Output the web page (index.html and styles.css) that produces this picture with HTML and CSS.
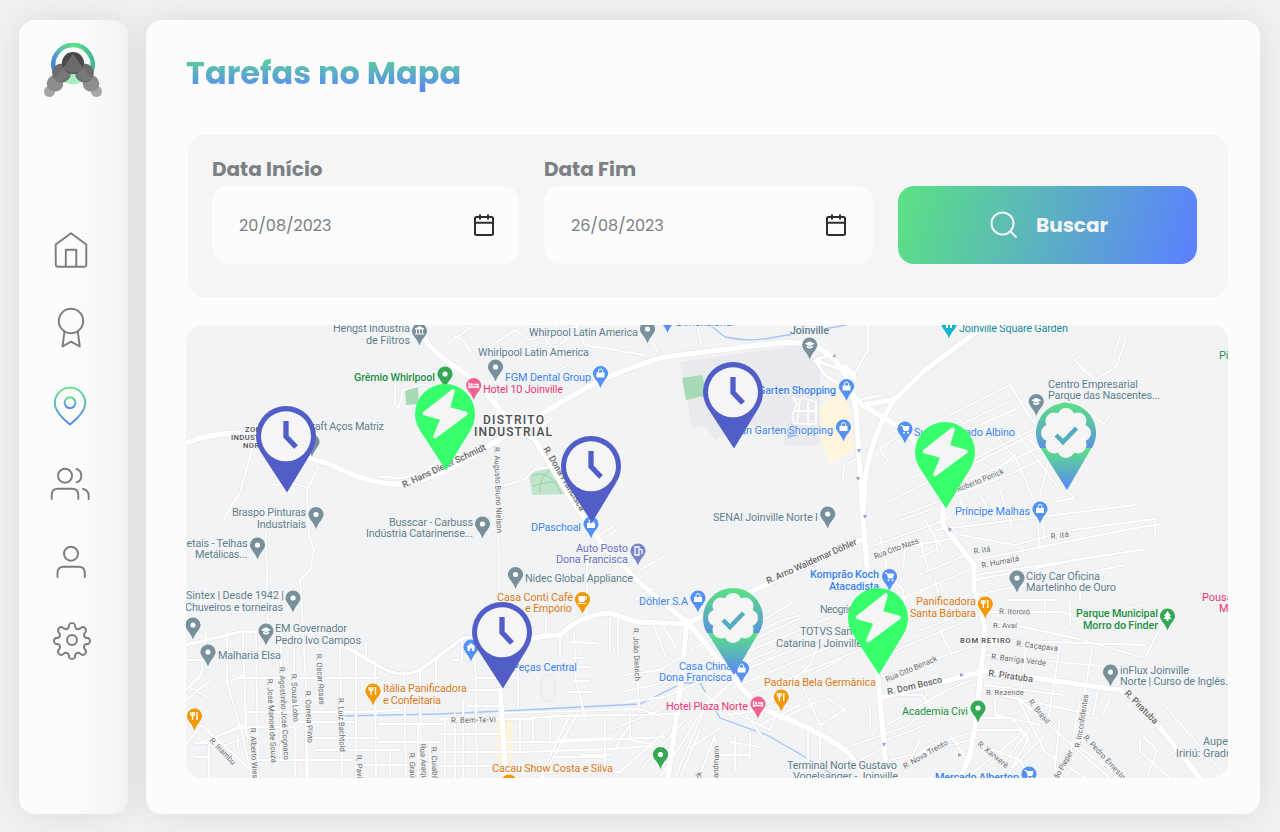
FILE: index.html
```html
<!DOCTYPE html>
<html lang="pt-BR">
<head>
<meta charset="utf-8">
<title>Tarefas no Mapa</title>
<link rel="stylesheet" href="styles.css">
</head>
<body>
<div class="app">
  <aside class="sidebar">
    <svg class="logo" width="60" height="56" viewBox="43 42 60 56">
      <defs>
        <linearGradient id="ring" x1="0" y1=".5" x2="1" y2=".4"><stop offset="0" stop-color="#4588dc"/><stop offset=".2" stop-color="#5bc0ad"/><stop offset=".6" stop-color="#5be283"/><stop offset="1" stop-color="#3fb795"/></linearGradient>
      </defs>
      <path d="M59 77q14 15 28 0l-14-18z" fill="#a9efbd"/>
      <path d="M54.500 71.500a19.700 19.700 0 1 1 37 0" fill="none" stroke="url(#ring)" stroke-width="4.500"/>
      <g>
        <g fill="#a6a6a6"><circle cx="49.500" cy="91.500" r="5.500"/><circle cx="96.500" cy="91.500" r="5.500"/></g>
        <g fill="#8d8d8d"><circle cx="55" cy="83.500" r="8.300"/><circle cx="91" cy="83.500" r="8.300"/></g>
        <g fill="#6c6c6c"><circle cx="61.500" cy="73" r="9.400"/><circle cx="84.500" cy="73" r="9.400"/></g>
        <circle cx="73" cy="63" r="11" fill="#484848"/>
        <path d="M73 54l10 14q-10 10-20 0z" fill="#6b6b6b"/>
        <path d="M63 68L54 79q9 6 16-5zM83 68l9 11q-9 6-16-5z" fill="#808080" opacity=".6"/>
      </g>
    </svg>
    <nav class="nav">
      <a class="nav-item"><svg viewBox="51 230 40 40"><path d="M55.700 244.500L71 233.300l15.300 11.200v20q0 2.200-2.200 2.200H58q-2.200 0-2.200-2.200zM65.800 266.500v-16.700h10.500v16.700"/></svg></a>
      <a class="nav-item"><svg viewBox="51 308 40 40"><circle cx="71" cy="321" r="12.200"/><path d="M64.500 331.500l-2 15 8.500-4.800 8.800 4.800-2-15"/></svg></a>
      <a class="nav-item nav-item-active"><svg viewBox="51 386 40 40"><defs><linearGradient id="gb" x1="0" y1="0" x2="0" y2="1"><stop offset="0" stop-color="#5be283"/><stop offset="1" stop-color="#5880fa"/></linearGradient></defs><path stroke="url(#gb)" d="M70 424.500c-7-5.500-15.200-13-15.200-21.700a15.200 15.200 0 0 1 30.400 0c0 8.700-8.200 16.200-15.200 21.700z"/><circle stroke="url(#gb)" cx="70" cy="402.700" r="5.400"/></svg></a>
      <a class="nav-item"><svg viewBox="51 464 40 40"><circle cx="65" cy="475.700" r="7"/><path d="M51.700 499v-4q0-6.300 6.300-6.300h14q6.300 0 6.300 6.300v4M76.500 469a7 7 0 0 1 0 13.300M83 489q5.700 1.500 5.700 6.500v3.500"/></svg></a>
      <a class="nav-item"><svg viewBox="51 542 40 40"><circle cx="71" cy="553.700" r="7"/><path d="M57.500 577v-4q0-6.300 6.300-6.300h14.700q6.300 0 6.300 6.300v4"/></svg></a>
      <a class="nav-item"><svg viewBox="49 620 40 40"><circle cx="70" cy="640" r="5"/><path d="M67 625a3.200 3.200 0 0 1 6 0v1.300c.5 3 3.500 3.600 5.300 2l1-.8a3.200 3.200 0 0 1 4.300 4.300l-.9 1.200c-1.500 2-.6 4.800 2 5h1.300a3.200 3.200 0 0 1 0 6h-1.300c-2.600.3-3.500 3-2 5l.9 1.200a3.200 3.200 0 0 1-4.300 4.300l-1-.8c-1.800-1.600-4.800-1-5.300 2v1.300a3.200 3.200 0 0 1-6 0v-1.300c-.5-3-3.500-3.600-5.300-2l-1 .8a3.200 3.200 0 0 1-4.300-4.300l.9-1.200c1.500-2 .6-4.700-2-5h-1.300a3.200 3.200 0 0 1 0-6h1.300c2.600-.2 3.500-3 2-5l-.9-1.200a3.200 3.200 0 0 1 4.300-4.300l1 .8c1.800 1.600 4.800 1 5.300-2z"/></svg></a>
    </nav>
  </aside>
  <main class="panel">
    <h1 class="title">Tarefas no Mapa</h1>
    <form class="filters">
      <label class="field field-start"><span class="field-label">Data Início</span>
        <span class="field-box"><span class="date">20/08/2023</span><svg class="calendar" viewBox="0 0 22 24"><rect x="2" y="4" width="18" height="18" rx="1.500"/><path d="M2 9.700h18M7 1.500v5M15 1.500v5"/></svg></span></label>
      <label class="field field-end"><span class="field-label">Data Fim</span>
        <span class="field-box"><span class="date">26/08/2023</span><svg class="calendar" viewBox="0 0 22 24"><rect x="2" y="4" width="18" height="18" rx="1.500"/><path d="M2 9.700h18M7 1.500v5M15 1.500v5"/></svg></span></label>
      <button class="search" type="button"><svg class="search-icon" viewBox="0 0 28 28"><circle cx="12.500" cy="12.500" r="11"/><path d="M20.500 20.500l6 6"/></svg><span>Buscar</span></button>
    </form>
    <div class="map">
    <svg width="1042" height="453" viewBox="186 325 1042 453">
      <defs>
        <g id="poi"><path d="M0-7.600A7.600 7.600 0 0 1 7.600 0C7.600 4.500 2.500 7 0 14.500C-2.500 7-7.600 4.500-7.600 0A7.600 7.600 0 0 1 0-7.600z"/></g>
        <g id="dot"><use href="#poi"/><circle r="2.600" fill="#fff"/></g>
        <g id="bag"><use href="#poi"/><path d="M-4-1h8v5h-8z" fill="#fff"/><path d="M-2-1v-1.500a2 2 0 0 1 4 0V-1" fill="none" stroke="#fff"/></g>
        <g id="cart"><use href="#poi"/><path d="M-4.500-3.500h2l1.500 5h4l1-4h-6" fill="#fff" stroke="#fff"/><circle cx="-1" cy="3.700" r="1" fill="#fff"/><circle cx="3" cy="3.700" r="1" fill="#fff"/></g>
        <g id="food"><use href="#poi"/><path d="M-2-4v8M-3.800-4v2.500q0 1 1.800 1t1.800-1V-4M2.500 4v-8" fill="none" stroke="#fff" stroke-width="1.400"/></g>
        <g id="cup"><use href="#poi"/><path d="M-4-3.500h6.500v4q0 2-2 2h-2.500q-2 0-2-2zM-4.500 3.500h8v1h-8z" fill="#fff"/><path d="M2.500-2.700h1.500v2.500H2.500" fill="none" stroke="#fff"/></g>
        <g id="bed"><use href="#poi"/><path d="M-4.500-3v6M4.500 3V-1H0M-4.500 1.500h9" fill="none" stroke="#fff" stroke-width="1.300"/><circle cx="-2" cy="-1" r="1.200" fill="#fff"/></g>
        <g id="cap"><use href="#poi"/><path d="M0-3.800l5 2.500-5 2.600-5-2.600zM-3 .6v2q3 2 6 0v-2L0 2z" fill="#fff"/></g>
        <g id="museum"><use href="#poi"/><path d="M-4.500-2L0-4.500 4.500-2zM-4.500 3h9M-3-1.500v4M0-1.500v4M3-1.500v4" fill="#fff" stroke="#fff"/></g>
        <g id="clock"><path d="M0-30A30 30 0 0 1 30 0Q30 9 25 17L1 56.500-24 18Q-30 9-30 0A30 30 0 0 1 0-30z" fill="#525ec7"/><circle r="25" cy=".3" fill="#f5f5f5"/><path d="M0-15V.500L10 11" fill="none" stroke="#525ec7" stroke-width="5.300"/></g>
        <g id="bolt"><path d="M0-30A30 30 0 0 1 30 0Q30 9 25 17L1 56.500-24 18Q-30 9-30 0A30 30 0 0 1 0-30z" fill="#38ff6c"/><path d="M8-23L3-5.500 21-.500-10 22.500-2.500 4.500-20.500-.500z" fill="#f5f5f5" stroke="#f5f5f5" stroke-width="3.600" stroke-linejoin="round"/></g>
        <linearGradient id="pg" x1="0" y1="0" x2="0" y2="1"><stop offset="0" stop-color="#5be283"/><stop offset="1" stop-color="#5b83fb"/></linearGradient>
        <linearGradient id="ph" x1="0" y1="0" x2="0" y2="1"><stop offset="0" stop-color="#5be283"/><stop offset="1" stop-color="#5a92dc"/></linearGradient>
        <g id="check"><path d="M-26 15A30 30 0 1 1 26 15z" fill="url(#ph)"/><path d="M-25.500 15h51L1 57z" fill="url(#pg)"/><g fill="#f5f5f5"><circle r="21"/><circle cy="-16.500" r="8.500"/><circle cy="16.500" r="8.500"/><circle cx="16.500" r="8.500"/><circle cx="-16.500" r="8.500"/><circle cx="12" cy="-12" r="8.500"/><circle cx="12" cy="12" r="8.500"/><circle cx="-12" cy="-12" r="8.500"/><circle cx="-12" cy="12" r="8.500"/></g><path d="M-10 2l7 7L10.500-5" fill="none" stroke="#54acc0" stroke-width="4.500"/></g>
        <g id="minor">
          <path d="M254 443L240 492l-18 30M271 485l25-1 12 4M319 466l-12 25 2 45 5 14-4 20-10 10 2 30 2 40 3 50 1 90M381 477l20 1 25-6 10-10-2-30M395 385l0 20 4 3 4-18 20-6 22 6"/>
          <path d="M266 533l2 95M495 371l3 70 1 200M445 345l30-20M452 335l12 6 14 22M485 350l30-20 15 10 50-15M505 368l28 15 35-18M520 348l15 12 32-20-12-15M545 340l16 14M540 428l12-10M575 325l10 20 60 10M658 352l-15-27M697 325l5 22M500 487l25-8 10-10 25-3"/>
          <path d="M587 545l0 72M610 535l8-6M600 535l15-10M640 570l25-14M635 600l18-12M502 713l138-4 26 9M574 632l2 50 9 35M571 642l26 1M572 658l12 0M574 667l16 0M574 681l16 0M568 692l24 0M610 618v33M618 618v35M635 628l4 80M653 624l13 33M660 620l17 30M625 691l30-6 55-25 90-42M625 675l35-5 25-15M625 702l40-5 50-22 60-25M518 660l0 48M546 615v20M560 635v22"/>
          <path d="M462 640v20l-8 0M475 645l2 133M475 678h27M469 690h33M469 706h33M440 719l80 0 40-3 120-2M440 734h62M440 752h80l90-3 40-3 15 10M440 766h70M445 720v58M500 742h60l105-5M520 716v35M533 716v25M550 716v27M577 714l-35 64M570 714l-30 64M605 718v60M560 740l50-2M555 757h50M610 730l50-20M615 749l15-25M630 712v28l25 5M545 772h75l45-40M610 755h-30"/>
          <path d="M186 690l15-15 5-40M186 660h17M227 633v50M227 683l17-8M227 683l15 50 10 45M243 633l3 100 5 10M256 630l2 148M240 678h105l33 0M247 712h110l43-2M258 760h94M243 727l50 0M281 635v125M294 640l1 138M306 722v56M340 645l2 120 0 13M356 650v128M375 665l1 113M320 678h55M322 712h55M315 750h85M358 765h75M404 672l2 106M420 670l1 108M436 660v50M378 724h65M378 742h60M366 642v20M189 687l20 11M186 745l15-20 50 45M201 742l40-14 12 0M194 743h15v35M194 757h16M212 738l35-15M225 745l20-7M238 735v12M186 700l25-20M390 750v28M418 724v54M430 740v38M455 714v64M463 700v78M310 738h68M294 722h60"/>
          <path d="M793 397l6 3 5-2 12 4v22h-22l-2-8 5-12zM800 400l-3 22M808 402v20M795 411h22M868 325v25l-14 24M842 370l-24-10M843 480l1-15 16-7M858 400l24-5M880 449l25-18M880 449l8 12M913 478l60-35M890 501l90-45 60-30M903 515l110-42 40-20M935 530l120-15 80-10"/>
          <path d="M920 430l90-45 22 35 35 45M935 445l85-38M960 425l50-24M965 468l75-38M970 480l85-40M986 424l30 35 20 45 4 45M1015 430l45 60M1030 440l30 30 8 22M1050 455l-10 40M1048 375l30 40M1084 372l-9-12 6-5M1080 365l15 15 22-14 4-14M1115 352l5-15M1122 352l4-14M1095 380l-15 20M1085 408l18 16 8-10M1069 492l5 6-20 4M1000 490l12 35M980 495l15 25M960 500l10 20M1015 455l-30 25"/>
          <path d="M960 535l55 10 50-14 90-12M975 560l150-30 35-6M974 580l130-25M1043 520l2 22M1155 521v15M975 595l150-30M976 575l170-26M1005 600h50M1045 600v15M1070 600v25l70-20M1080 570v30M985 612h75l40 8M985 640l160 5M987 655l155 15M990 620l85 18 70 20 10-20 12-20M1060 645l-12 75M1026 645l-5 50M1092 650l-12 70M1140 670l-8 25M985 685l80 10M985 692l105 22"/>
          <path d="M985 692l30 0 30 60 40 26M1020 700l90 78M1045 735l-30 30M1030 728l-30 40M995 700v15l45 10M976 718h35l18 20-20 35M974 730h45l10 12M1060 717l-6 60M1080 700l-10 55-10 23M1110 700l-8 15M1098 690l-5 25M1160 700l60 70M1142 735l15 15-10 28M1075 745l50 33M1140 740v12l30 26M1180 748l-15 10M980 745l40 15 10 18M970 775l50-40"/>
          <path d="M700 690l30 25 30-5 50-45 10-25M712 655l70-35 20-5M716 665l120-50M725 678l120-50M732 688l100-42M750 694l125-50M690 650l60-30M760 622l25-15 8-5M720 705l50 25 12-30M735 700l30 40M800 680l20 45 25-15-18-12M800 680l40-20M700 730l-20 48M715 738l2 30M690 748l30-20M735 735v35M750 733v25M760 725l40-20M780 720l40-20M808 730v48M820 735v25M840 750l70-25 10-15M850 765l30-15M887 725l60-35 25-10M886 740l40-15M890 760l80-20M867 560l30-12 60-10M880 535l8 40 15 15 5 40M910 620l60-25M915 632l60-22M885 655l95-40M890 675l85-30M905 550l-3 20M920 540l8 30M935 535l3 20M920 590l10 25M935 580l10 40M900 600l80-35M870 708v20M905 765l25-20 50-15M920 740l-10 20M893 695l30 0 10 18M950 735l15 22M940 630l12 26M925 680l2 16"/>
          <path d="M860 550l30-10 55-20 15-14M918 575l48-20M915 560l20-10M925 520l15 25M900 520l30-10M675 778l30-70 30-30M660 778l50-80M640 770l45-50M700 775l15-40M720 755h30M730 742l30 5"/>
        </g>
        <g id="major">
          <path d="M186 443Q215 431 256 434M300 456L330 464Q370 486 405 484 440 478 488 446L560 403Q610 372 665 357L770 344Q815 338 835 360L850 382 856 410 863 520M420 330Q428 350 460 370L480 385 505 418 535 440 575 505 605 548 640 583 690 625 745 692 765 710Q830 735 850 755L868 778"/>
          <path d="M975 333L925 370 893 401Q870 440 865 480L863 520 870 600 880 700 887 778M850 392L862 405 893 400M862 405L905 430 925 455 943 500 943 525 974 565 974 590Q990 625 982 660L976 720 970 755 960 778M690 622L755 590 860 540M500 690L506 778M687 620L680 690 668 778M880 698L985 671 1120 690 1150 715 1200 778M495 645Q545 635 560 635 580 615 610 613L637 622 687 624M475 380l30 35"/>
        </g>
        <g id="mid"><path d="M186 645L240 632H320L337 642 377 665Q400 680 420 670L463 638 490 636M855 395l-30-20-10-15 15-5 26 25M818 362l32 10M845 365l10 10"/></g>
      </defs>
      <rect x="186" y="325" width="1042" height="453" fill="#f1f3f5"/>
      <path d="M680 362L800 345 820 365 820 445H784L786 430 750 425 715 440 705 425 692 428z" fill="#e8eaed"/>
      <path d="M835 395L820 408 822 443 830 464 855 450 848 400zM857 403l5 8-4 4z" fill="#fef5dc"/>
      <path d="M496 720h16v50h-14z" fill="#fdf4d9"/>
      <path d="M405 388l13-1 1 17-13 1zM682 378l20-3 6 20-22 5z" fill="#a8dab5"/>
      <path d="M529 473l19-4 12-1 8 26-36 1z" fill="#c0e5ca"/>
      <path d="M531 476q20-8 30 18M540 492q-2-14 12-24M533 486q20-6 30-3" stroke="#8ccca0" fill="none" stroke-width=".8"/>
      <path d="M787 430l8-10 2 16-9 2z" fill="#a3c4fa"/>
      <g fill="none" stroke="#a3c4fa" stroke-width="1.300"><path d="M710 325l15 12Q748 342 770 338L847 325M340 716L440 714 503 711 640 704 683 683H700L720 718 767 735 800 754 833 775"/></g>
      <g fill="none" stroke-linecap="round" stroke-linejoin="round">
        <use href="#minor" stroke="#e4e6e9" stroke-width="3"/><use href="#mid" stroke="#e2e4e7" stroke-width="4.500"/><use href="#major" stroke="#e6e8ea" stroke-width="6.500"/>
        <use href="#minor" stroke="#fff" stroke-width="1.800"/><use href="#mid" stroke="#fff" stroke-width="3.200"/><use href="#major" stroke="#fff" stroke-width="5.200"/>
        <ellipse cx="548" cy="688" rx="7" ry="14" stroke="#e6e8ea"/>
      </g>
      <g class="street">
        <text transform="translate(404 488) rotate(-25)" textLength="91">R. Hans Dieter Schmidt</text>
        <text transform="translate(543 449) rotate(59)" textLength="73">R. Dona Francisca</text>
        <text transform="translate(768 584) rotate(-24)" textLength="98">R. Arno Waldemar Döhler</text>
        <text transform="translate(888 695) rotate(-13)" textLength="56">R. Dom Bosco</text>
        <text transform="translate(988 676) rotate(8)" textLength="45">R. Piratuba</text>
        <text transform="translate(1124 694) rotate(45)" textLength="43">R. Piratuba</text>
      </g>
      <g class="lane">
        <text transform="translate(494 447) rotate(88)" textLength="86">R. Augusto Bruno Nielson</text>
        <text transform="translate(633 628) rotate(88)" textLength="53">R. João Dietrich</text>
        <text transform="translate(316 654) rotate(86)" textLength="51">R. Oscar Rosas</text>
        <text transform="translate(279 667) rotate(87)" textLength="93">R. Agostinho José Cognaco</text>
        <text transform="translate(291 674) rotate(87)" textLength="48">R. Souza Lobo</text>
        <text transform="translate(267 679) rotate(87)" textLength="84">R. José Manoel de Souza</text>
        <text transform="translate(305 691) rotate(87)" textLength="52">R. Correia Pinto</text>
        <text transform="translate(338 698) rotate(88)" textLength="54">R. Luiz Bachtold</text>
        <text transform="translate(250 728) rotate(87)" textLength="53">R. Alberto Wiest</text>
        <text transform="translate(356 755) rotate(87)">R. Pavão</text>
        <text transform="translate(409 753) rotate(87)">R. Graúna</text><text transform="translate(420 744) rotate(87)">Rua Araquã</text><text transform="translate(431 747) rotate(87)">R. Cuiabá</text>
        <text transform="translate(209 741) rotate(46)" textLength="34">R. Inambu</text>
        <text transform="translate(451 723) rotate(-1)" textLength="45">R. Bem-Te-Vi</text>
        <text transform="translate(718 778) rotate(-88)" textLength="32">andmann</text><text transform="translate(701 780) rotate(-88)">ck</text>
        <text transform="translate(875 559) rotate(-20)" textLength="47">Rua Otto Nass</text>
        <text transform="translate(958 492) rotate(-22)" textLength="50">Roberto Ponick</text>
        <text transform="translate(974 554) rotate(-9)" textLength="17">R. Itá</text><text transform="translate(1051 539) rotate(-7)" textLength="18">R. Itá</text>
        <text transform="translate(982 568) rotate(-11)" textLength="38">R. Humaitá</text>
        <text transform="translate(999 614) rotate(1)" textLength="31">R. Itororó</text><text x="993" y="628" textLength="24">R. Avaí</text>
        <text transform="translate(1016 646) rotate(7)" textLength="42">R. Caçapava</text><text transform="translate(991 659) rotate(7)" textLength="55">R. Barriga Verde</text>
        <text transform="translate(986 695)" textLength="38">R. Rezende</text><text transform="translate(1028 702) rotate(51)" textLength="29">R. Brasil</text>
        <text transform="translate(1080 748) rotate(-81)" textLength="54">R. Inconfidentes</text>
        <text transform="translate(1083 738) rotate(47)" textLength="58">R. Pedro Ernesto</text>
        <text transform="translate(977 745) rotate(39)" textLength="37">R. Xanxerê</text>
        <text transform="translate(905 769) rotate(-30)" textLength="50">R. Nova Trento</text>
        <text transform="translate(887 682) rotate(-23)" textLength="55">Rua Otto Benack</text>
        <text transform="translate(1054 787) rotate(-61)" textLength="40">João Pieper</text>
      </g>
      <g class="poi gray">
        <text x="333" y="332" textLength="77">Hengst Indústria</text><text x="366" y="343.500" textLength="44">de Filtros</text>
        <text x="529" y="336" textLength="109">Whirpool Latin America</text><text x="478" y="356" textLength="111">Whirlpool Latin America</text>
        <text x="305" y="430" textLength="79">Kraft Aços Matriz</text>
        <text x="232" y="516" textLength="74">Braspo Pinturas</text><text x="257" y="527.500" textLength="49">Industriais</text>
        <text x="186.500" y="547" textLength="61">etais - Telhas</text><text x="195" y="558" textLength="52">Metálicas...</text>
        <text x="186" y="599" textLength="98">Sintex | Desde 1942 |</text><text x="185" y="610.500" textLength="98">Chuveiros e torneiras</text>
        <text x="275" y="632" textLength="72">EM Governador</text><text x="275" y="643.500" textLength="86">Pedro Ivo Campos</text><text x="218" y="659" textLength="63">Malharia Elsa</text>
        <text x="389" y="526" textLength="84">Busscar - Carbuss</text><text x="366" y="537" textLength="107">Indústria Catarinense...</text>
        <text x="525" y="582" textLength="108">Nidec Global Appliance</text><text x="713" y="521" textLength="105">SENAI Joinville Norte I</text>
        <text x="790" y="334" textLength="39" font-weight="500">Joinville</text>
        <text x="1048" y="387.500" textLength="90">Centro Empresarial</text><text x="1048" y="399" textLength="112">Parque das Nascentes...</text>
        <text x="820" y="613" textLength="50">Neogrid S.A</text><text x="800" y="635" textLength="61">TOTVS Santa</text><text x="776" y="646.500" textLength="86">Catarina | Joinville</text>
        <text x="1026" y="579.500" textLength="74">Cidy Car Oficina</text><text x="1026" y="591" textLength="90">Martelinho de Ouro</text>
        <text x="1120" y="673.500" textLength="69">inFlux Joinville</text><text x="1120" y="685" textLength="108">Norte | Curso de Inglês.</text>
        <text x="1203" y="745">Auper</text><text x="1176" y="757">Iririú: Graduação</text>
        <text x="787" y="769" textLength="110">Terminal Norte Gustavo</text><text x="793" y="780" textLength="105">Vogelsanger - Joinville</text>
      </g>
      <g class="poi blue">
        <text x="505" y="380.500" textLength="86">FGM Dental Group</text><text x="531" y="531" textLength="50">DPaschoal</text><text x="639" y="604.500" textLength="49">Döhler S.A</text>
        <text x="758" y="394" textLength="78" font-weight="500">Garten Shopping</text><text x="731" y="434" textLength="102">Man Garten Shopping</text><text x="676" y="326" textLength="58">Dimensional</text>
        <text x="914" y="436" textLength="101">Supermercado Albino</text><text x="955" y="515" textLength="75">Príncipe Malhas</text>
        <text x="810" y="578" textLength="69" font-weight="500">Komprão Koch</text><text x="829" y="590" textLength="50" font-weight="500">Atacadista</text>
        <text x="679" y="669.500" textLength="53">Casa China</text><text x="659" y="681" textLength="73">Dona Francisca</text><text x="512" y="670.500" textLength="65">Peças Central</text>
        <text x="935" y="781" textLength="84" font-weight="500">Mercado Alberton</text>
      </g>
      <g class="poi orange">
        <text x="497" y="600.500" textLength="76">Casa Conti Café</text><text x="525" y="611.500" textLength="47">e Empório</text>
        <text x="383" y="692" textLength="84">Itália Panificadora</text><text x="383" y="703.500" textLength="58">e Confeitaria</text><text x="492" y="771.500" textLength="121">Cacau Show Costa e Silva</text>
        <text x="764" y="686" textLength="112">Padaria Bela Germânica</text><text x="916" y="605" textLength="60">Panificadora</text><text x="910" y="616.500" textLength="66">Santa Bárbara</text>
      </g>
      <g class="poi green"><text x="354" y="381" textLength="81" font-weight="500">Grêmio Whirlpool</text><text x="1219" y="359">Pizza</text><text x="902" y="714.500" textLength="66">Academia Civi</text><text x="1076" y="617" textLength="82" font-weight="500">Parque Municipal</text><text x="1083" y="628.500" textLength="75" font-weight="500">Morro do Finder</text></g>
      <g class="poi pink"><text x="483" y="393" textLength="80">Hotel 10 Joinville</text><text x="666" y="710" textLength="82">Hotel Plaza Norte</text><text x="1202" y="600.500">Pousada</text><text x="1219" y="612">Mar</text></g>
      <g class="poi violet"><text x="576" y="552" textLength="52">Auto Posto</text><text x="556" y="563" textLength="72">Dona Francisca</text></g>
      <text class="poi teal" x="959" y="331.500" textLength="109">Joinville Square Garden</text>
      <g class="area"><text x="483" y="423.500" textLength="61">DISTRITO</text><text x="474" y="435.500" textLength="78">INDUSTRIAL</text></g>
      <g class="area-small"><text x="245" y="431.500">ZONA</text><text x="231" y="439.500">INDUSTRIAL</text><text x="243" y="447.500">NORTE</text><text x="960" y="643" textLength="51">BOM RETIRO</text></g>
      <g fill="#78909c">
        <use href="#museum" x="419.500" y="331"/><use href="#dot" x="495.500" y="367"/><use href="#dot" x="647.500" y="329"/><use href="#cap" x="809.700" y="345"/><use href="#dot" x="312" y="442"/><use href="#dot" x="316" y="514.500"/><use href="#dot" x="257.500" y="545"/><use href="#dot" x="293" y="598"/><use href="#dot" x="193" y="625"/><use href="#cap" x="266" y="631"/><use href="#dot" x="208" y="652"/><use href="#dot" x="482.500" y="524"/><use href="#dot" x="515.500" y="574.500"/><use href="#dot" x="827.700" y="514"/><use href="#cap" x="1036.300" y="401.500"/><use href="#dot" x="1065" y="410"/><use href="#dot" x="1017" y="578"/><use href="#dot" x="1110.500" y="672"/>
      </g>
      <g fill="#5491f5"><use href="#bag" x="600.500" y="373.500"/><use href="#dot" x="667.500" y="318.500"/><use href="#bag" x="591" y="524"/><use href="#bag" x="698" y="598"/><use href="#bag" x="846.500" y="386.500"/><use href="#bag" x="843.500" y="427"/><use href="#cart" x="905" y="429"/><use href="#bag" x="1040" y="509"/><use href="#cart" x="889.500" y="576.500"/><use href="#bag" x="741.500" y="668.500"/><use href="#cart" x="1029" y="774"/><use href="#poi" x="471" y="647"/><path d="M466.500 647l4.500-4 4.500 4h-1v4h-2.500v-2.500h-2v2.500h-2.500v-4z" fill="#fff"/></g>
      <g fill="#f29900"><use href="#cup" x="582.500" y="599.500"/><use href="#food" x="373" y="691"/><use href="#food" x="194.500" y="716"/><use href="#food" x="781.300" y="697"/><use href="#food" x="985.300" y="604"/><use href="#food" x="509" y="782"/></g>
      <g fill="#34a853"><use href="#dot" x="445" y="374"/><use href="#dot" x="660.500" y="754.500"/><use href="#dot" x="978" y="708"/><use href="#poi" x="1167.500" y="616"/><path d="M1167.500 611l3.500 5h-1.500l2 3h-3v2h-2v-2h-3l2-3h-1.500z" fill="#fff"/></g>
      <g fill="#f06292"><use href="#bed" x="473.700" y="385.500"/><use href="#bed" x="758" y="704"/></g>
      <g fill="#7986cb"><use href="#poi" x="638" y="551"/><path d="M635 547h4v8h-4zM640 549l2 1v4" fill="none" stroke="#fff" stroke-width="1.300"/></g>
      <g fill="#12b5cb"><use href="#poi" x="949" y="324"/><path d="M945 323h8v1l-1 0v4h-2v-3h-2v3h-2v-4h-1z" fill="#fff"/></g>
      <g fill="#9a9fcf"><path d="M865 519l-2-4h4zM858 481l-2-4h4zM859 453l-2-4h4zM884 747l-2-4h4zM964 675l-4-2v4zM962 755l-4-2v4zM949 532l-1-5 4 2zM836 357l-4 0 3-3z"/></g>
      <use href="#clock" x="286" y="436"/><use href="#clock" x="591" y="466"/><use href="#clock" x="733" y="392"/><use href="#clock" x="502" y="632"/>
      <use href="#bolt" x="445" y="414"/><use href="#bolt" x="945" y="452"/><use href="#bolt" x="878" y="618"/>
      <use href="#check" x="1066" y="433"/><use href="#check" x="733" y="618"/>
    </svg>
    </div>
  </main>
</div>
</body>
</html>
```

FILE: styles.css
```css
* { box-sizing: border-box; }
body { margin: 0; background: #f1f1f1; font-family: Poppins, Inter, "Open Sans", sans-serif; color: #7a8084; }
.app { display: flex; gap: 18px; width: 1280px; height: 832px; padding: 20px 20px 18px 19px; overflow: hidden; }
.sidebar { width: 109px; border-radius: 16px; background: linear-gradient(90deg, #fcfcfc 50%, #f3f3f3); box-shadow: 0 0 34px rgba(0, 0, 0, .09); display: flex; flex-direction: column; align-items: center; padding-top: 22px; }
.logo { display: block; margin-right: 1px; }
.nav { display: flex; flex-direction: column; gap: 38px; margin: 132px 0 0 -5px; }
.nav-item { display: block; width: 40px; height: 40px; }
.nav-item svg { display: block; width: 40px; height: 40px; overflow: visible; fill: none; stroke: #787d82; stroke-width: 1.9; stroke-linecap: round; stroke-linejoin: round; }
.panel { flex: 1; border-radius: 16px; background: #fcfcfc; box-shadow: 0 0 34px rgba(0, 0, 0, .09); padding: 29px 32px 36px 40px; }
.title { margin: 0; width: 290px; height: 46px; font-size: 32px; line-height: 47px; font-weight: 700; white-space: nowrap; background: linear-gradient(180deg, #5be283 5%, #5b83fb 92%); -webkit-background-clip: text; background-clip: text; color: transparent; }
.filters { display: flex; align-items: flex-start; height: 162px; margin: 40px 0 28px 2px; padding: 20px 24px; border-radius: 16px; background: #f5f5f5; }
.field { display: block; margin-right: 25px; }
.field-start { width: 307px; }
.field-end { width: 329px; }
.field-label { display: block; height: 31px; line-height: 28px; font-size: 20px; font-weight: 700; }
.field-box { display: flex; align-items: center; justify-content: space-between; height: 78px; padding: 0 24px 0 27px; border-radius: 16px; background: #fcfcfc; }
.field-end .field-box { padding-right: 26px; }
.date { font-size: 16px; font-weight: 400; }
.calendar { width: 22px; height: 24px; fill: none; stroke: #2e2e2e; stroke-width: 2; }
.search { display: flex; align-items: center; justify-content: center; gap: 18px; width: 299px; height: 78px; margin-top: 31px; padding: 0 0 0 3px; border: 0; border-radius: 16px; background: linear-gradient(105deg, #5be283, #5b83fb 96%); font: 700 20px/28px Poppins, Inter, sans-serif; color: #f5f5f5; }
.search-icon { width: 28px; height: 28px; fill: none; stroke: #f5f5f5; stroke-width: 2; }
.map { width: 1042px; height: 453px; border-radius: 16px; overflow: hidden; }
.map svg { display: block; font-family: Roboto, sans-serif; }
.poi { font-size: 10.9px; }
.poi text, text.poi { paint-order: stroke; stroke: #f5f6f8; stroke-width: 1.5px; }
g.gray text { fill: #607d8b; }
g.blue text { fill: #3b82f0; }
g.orange text { fill: #dc7914; }
g.green text { fill: #1e8e3e; }
g.pink text { fill: #ec3370; }
g.violet text { fill: #6671c5; }
text.teal { fill: #148d99; }
.street text, .lane text { paint-order: stroke; stroke: #f7f8f9; stroke-width: 1.5px; fill: #666; }
.street { font-size: 9.2px; font-weight: 500; }
.lane { font-size: 7.8px; }
.area text, .area-small text { fill: #4d4d4d; paint-order: stroke; stroke: #f7f8f9; stroke-width: 2px; }
.area { font-size: 12px; font-weight: 500; }
.area-small { font-size: 7.6px; font-weight: 500; letter-spacing: .4px; }
```
